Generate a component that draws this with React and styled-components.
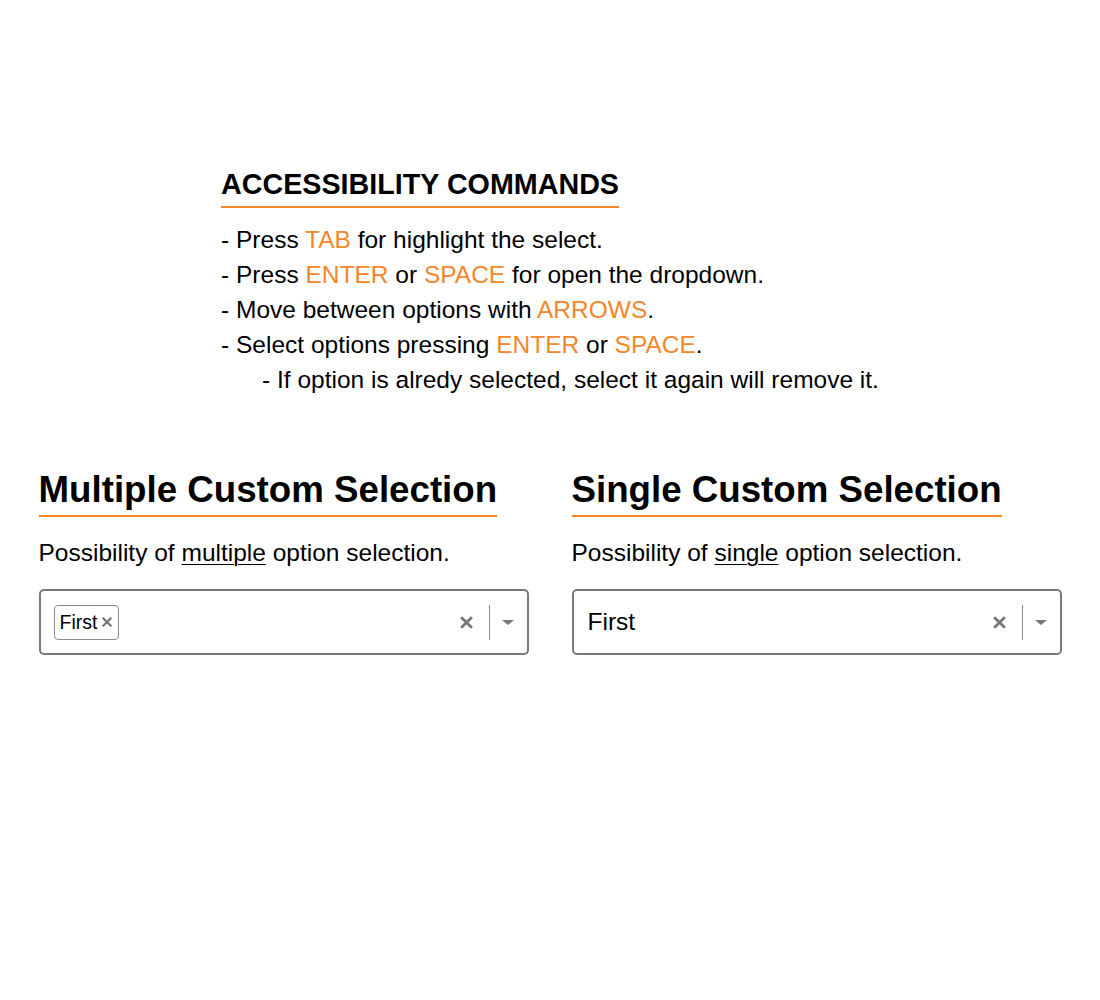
import styled, { createGlobalStyle } from "styled-components";

const GlobalStyle = createGlobalStyle`
  body {
    margin: 0;
    background: #fff;
    font-family: "Liberation Sans", Arial, sans-serif;
    color: #000;
  }
`;

const orange = "#f5862a";

const Page = styled.div`
  padding-top: 168px;
`;

const Commands = styled.div`
  display: flex;
  justify-content: center;
`;

const CommandsBox = styled.div`
  display: flex;
  flex-direction: column;
  align-items: flex-start;
`;

const CommandsTitle = styled.h3`
  margin: 0 0 14px;
  font-size: 28.7px;
  font-weight: 700;
  line-height: 33px;
  padding-bottom: 5px;
  border-bottom: 2px solid ${orange};
`;

const Line = styled.div`
  font-size: 24.5px;
  line-height: 35px;
  padding-left: ${(p) => (p.indent ? "41px" : "0")};
`;

const Key = styled.span`
  color: ${orange};
`;

const Sections = styled.div`
  display: grid;
  grid-template-columns: 490px 490px;
  column-gap: 43px;
  justify-content: center;
  margin-top: 72px;
`;

const Section = styled.section`
  display: flex;
  flex-direction: column;
  align-items: flex-start;
`;

const Title = styled.h2`
  margin: 0;
  font-size: 36.7px;
  font-weight: 700;
  line-height: 42px;
  padding-bottom: 4px;
  border-bottom: 2px solid ${orange};
`;

const Hint = styled.p`
  margin: 21px 0 21px;
  font-size: 24.5px;
  line-height: 30px;

  u {
    text-decoration-thickness: 1px;
    text-underline-offset: 3px;
  }
`;

const SelectBox = styled.div`
  box-sizing: border-box;
  width: 100%;
  height: 66px;
  border: 2px solid #7a7a7a;
  border-radius: 5px;
  display: flex;
  align-items: center;
  padding: 0 13px 0 ${(p) => (p.single ? "14px" : "13px")};
`;

const Values = styled.div`
  flex: 1;
  display: flex;
  align-items: center;
`;

const Chip = styled.span`
  display: inline-flex;
  align-items: center;
  gap: 4px;
  height: 35px;
  box-sizing: border-box;
  padding: 0 5px 0 5px;
  border: 1px solid #8a8a8a;
  border-radius: 4px;
  font-size: 19.5px;
`;

const ChipRemove = styled.span`
  display: flex;
`;

const SingleValue = styled.span`
  font-size: 24.5px;
`;

const Controls = styled.div`
  display: flex;
  align-items: center;
`;

const Clear = styled.span`
  display: flex;
  margin-right: 15px;
`;

const Divider = styled.span`
  width: 1px;
  height: 35px;
  background: #8a8a8a;
  margin-right: 12px;
`;

const Caret = styled.span`
  width: 0;
  height: 0;
  border-left: 6px solid transparent;
  border-right: 6px solid transparent;
  border-top: 5px solid #777;
`;

function Cross({ size, weight }) {
  return (
    <svg width={size} height={size} viewBox="0 0 14 14">
      <path d="M2 2 L12 12 M12 2 L2 12" stroke="#777" strokeWidth={weight} />
    </svg>
  );
}

function Select({ single, value }) {
  return (
    <SelectBox single={single}>
      <Values>
        {single ? (
          <SingleValue>{value}</SingleValue>
        ) : (
          <Chip>
            {value}
            <ChipRemove>
              <Cross size={12} weight={2.6} />
            </ChipRemove>
          </Chip>
        )}
      </Values>
      <Controls>
        <Clear>
          <Cross size={15} weight={2.6} />
        </Clear>
        <Divider />
        <Caret />
      </Controls>
    </SelectBox>
  );
}

export default function App() {
  return (
    <Page>
      <GlobalStyle />
      <Commands>
        <CommandsBox>
          <CommandsTitle>ACCESSIBILITY COMMANDS</CommandsTitle>
          <Line>- Press <Key>TAB</Key> for highlight the select.</Line>
          <Line>- Press <Key>ENTER</Key> or <Key>SPACE</Key> for open the dropdown.</Line>
          <Line>- Move between options with <Key>ARROWS</Key>.</Line>
          <Line>- Select options pressing <Key>ENTER</Key> or <Key>SPACE</Key>.</Line>
          <Line indent>- If option is alredy selected, select it again will remove it.</Line>
        </CommandsBox>
      </Commands>

      <Sections>
        <Section>
          <Title>Multiple Custom Selection</Title>
          <Hint>Possibility of <u>multiple</u> option selection.</Hint>
          <Select value="First" />
        </Section>
        <Section>
          <Title>Single Custom Selection</Title>
          <Hint>Possibility of <u>single</u> option selection.</Hint>
          <Select single value="First" />
        </Section>
      </Sections>
    </Page>
  );
}
